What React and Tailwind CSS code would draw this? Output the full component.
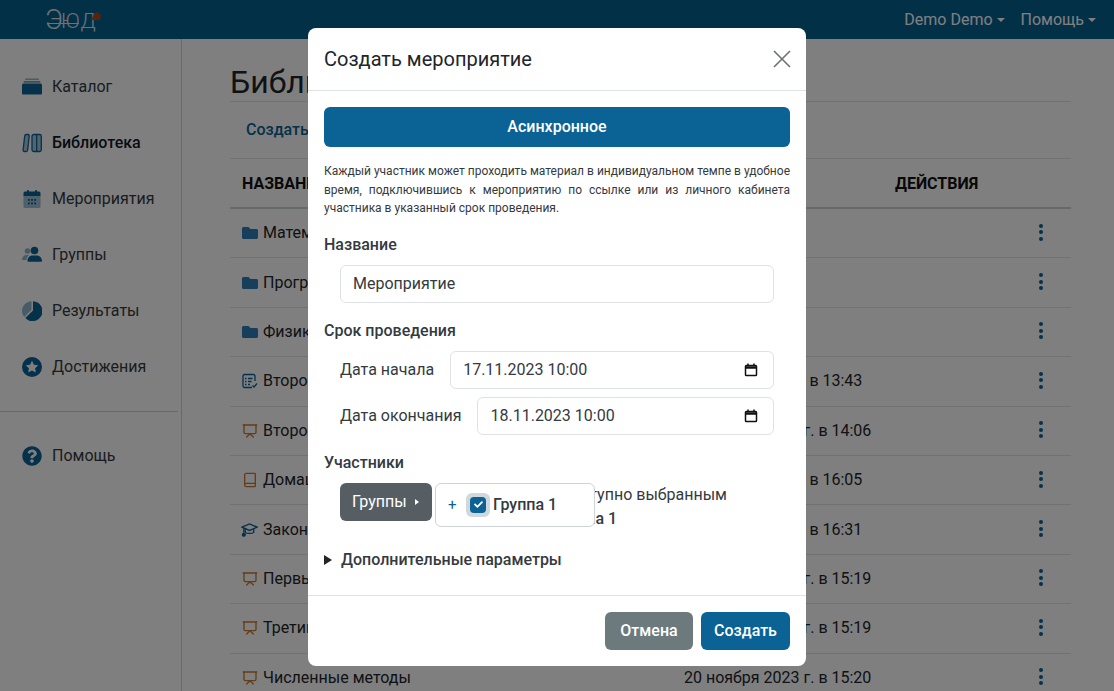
import React from "react";
import { Presentation, Book } from "lucide-react";
import { FaFolder, FaQuestionCircle, FaCheck } from "react-icons/fa";

const rows = [
  { icon: "folder", name: "Математика" },
  { icon: "folder", name: "Программирование" },
  { icon: "folder", name: "Физика" },
  { icon: "test", name: "Второй тест", date: "7 ноября 2023 г. в 13:43" },
  { icon: "slides", name: "Второй урок", date: "20 ноября 2023 г. в 14:06" },
  { icon: "book", name: "Домашнее задание", date: "7 ноября 2023 г. в 16:05" },
  { icon: "course", name: "Законы Ньютона", date: "7 ноября 2023 г. в 16:31" },
  { icon: "slides", name: "Первый урок", date: "20 ноября 2023 г. в 15:19" },
  { icon: "slides", name: "Третий урок", date: "20 ноября 2023 г. в 15:19" },
  { icon: "slides", name: "Численные методы", date: "20 ноября 2023 г. в 15:20" },
];

function RowIcon({ type }) {
  if (type === "folder") return <FaFolder className="w-[16px] h-[16px] text-[#2f7fb8]" />;
  if (type === "slides") return <Presentation className="w-[16px] h-[16px] text-[#c97a30]" strokeWidth={2} />;
  if (type === "book") return <Book className="w-[16px] h-[16px] text-[#c97a30]" strokeWidth={2} />;
  if (type === "course")
    return (
      <svg viewBox="0 0 18 16" className="w-[17px] h-[16px] -ml-[1px] text-[#0a6295]" fill="none" stroke="currentColor" strokeWidth="1.400">
        <path d="M1 5l8-3.500L17 5 9 8.500z" />
        <path d="M4.500 7v3.500c1.500 1.500 7.500 1.500 9 0V7" />
        <path d="M3 6v5" />
        <circle cx="3" cy="13" r="1.500" fill="currentColor" />
      </svg>
    );
  return (
    <svg viewBox="0 0 16 16" className="w-[16px] h-[16px] text-[#0a6295]" fill="none" stroke="currentColor" strokeWidth="1.300">
      <path d="M13 8V3a1.500 1.500 0 0 0-1.500-1.500h-9A1.500 1.500 0 0 0 1 3v10a1.500 1.500 0 0 0 1.500 1.500H10" />
      <path d="M6 5.500h4.500M6 8.500h3.500M6 11.500h2" />
      <path d="M3 5.500h1.500M3 8.500h1.500M3 11.500h1.500" />
      <path d="M10.500 12.500l1.500 1.500 3-3.500" />
    </svg>
  );
}

function NavIcon({ name }) {
  if (name === "catalog")
    return (
      <svg viewBox="0 0 20 20" className="w-5 h-5" fill="#0a6295">
        <rect x="3" y="1.500" width="14" height="1.500" rx="0.700" opacity="0.45" />
        <rect x="1.500" y="4" width="17" height="1.800" rx="0.700" opacity="0.6" />
        <path d="M1.500 6.500h17A1.500 1.500 0 0 1 20 8v8.500a1 1 0 0 1-1 1H1a1 1 0 0 1-1-1V8a1.500 1.500 0 0 1 1.500-1.500z" />
      </svg>
    );
  if (name === "library")
    return (
      <svg viewBox="0 0 20 20" className="w-5 h-5" fill="none" stroke="#0a6295" strokeWidth="1.300">
        <path d="M4.200 1.500h1.800c1 0 1.300.7 1.200 1.500L5.700 17c-.1 1-.8 1.500-1.700 1.500H2.500c-1 0-1.500-.7-1.400-1.500L2.700 3c.1-1 .6-1.500 1.500-1.500z" fill="#0a6295" fillOpacity="0.35" />
        <rect x="10" y="1.500" width="9.300" height="17" rx="1.800" fill="#0a6295" fillOpacity="0.35" />
        <path d="M14.700 1.500v17" />
      </svg>
    );
  if (name === "events")
    return (
      <svg viewBox="0 0 20 20" className="w-5 h-5">
        <rect x="1.500" y="6" width="17" height="13" rx="1.500" fill="#0a6295" opacity="0.4" />
        <path d="M3 2.500h14A1.500 1.500 0 0 1 18.500 4v3h-17V4A1.500 1.500 0 0 1 3 2.500z" fill="#0a6295" />
        <rect x="5" y="1" width="2" height="3" rx="0.800" fill="#0a6295" />
        <rect x="13" y="1" width="2" height="3" rx="0.800" fill="#0a6295" />
        <g fill="#0a6295">
          <rect x="6" y="10" width="1.800" height="1.800" />
          <rect x="9.100" y="10" width="1.800" height="1.800" />
          <rect x="12.200" y="10" width="1.800" height="1.800" />
          <rect x="6" y="13.500" width="1.800" height="1.800" />
          <rect x="9.100" y="13.500" width="1.800" height="1.800" />
          <rect x="12.200" y="13.500" width="1.800" height="1.800" />
        </g>
      </svg>
    );
  if (name === "groups")
    return (
      <svg viewBox="0 0 20 20" className="w-5 h-5" fill="#0a6295">
        <g opacity="0.45">
          <circle cx="5.500" cy="6" r="2.800" />
          <path d="M0 15c0-3 2-5 4.500-5H7c-1.500 1.200-2.500 3-2.500 5H0z" />
        </g>
        <circle cx="12.500" cy="5.500" r="3.800" />
        <path d="M5.500 16c0-3.300 2.300-5.500 5-5.500h4c2.900 0 5.500 2.200 5.500 5.500a.8.800 0 0 1-.8.800H6.300a.8.800 0 0 1-.8-.8z" />
      </svg>
    );
  if (name === "results")
    return (
      <svg viewBox="0 0 20 20" className="w-5 h-5" fill="#0a6295">
        <path d="M9.500 8.800V0.200C4.200 0.500 0 4.700 0 10c0 2.300.9 4.500 2.300 6z" opacity="0.45" />
        <path d="M11 0.200V9.400l-7.700 7.700A10 10 0 1 0 11 0.200z" />
      </svg>
    );
  if (name === "awards")
    return (
      <svg viewBox="0 0 20 20" className="w-5 h-5">
        <circle cx="10" cy="10" r="10" fill="#0a6295" />
        <path d="M10 3.800l1.900 3.900 4.300.6-3.100 3 .7 4.300L10 13.600l-3.800 2 .7-4.300-3.100-3 4.300-.6z" fill="#fff" />
      </svg>
    );
  return <FaQuestionCircle className="w-5 h-5 text-[#0a6295]" />;
}

function NavItem({ icon, label, active }) {
  return (
    <div className="h-[56px] flex items-center pl-[22px] gap-[10px]">
      <NavIcon name={icon} />
      <span className={active ? "font-medium text-[#111827]" : "text-[#343a40]"}>{label}</span>
    </div>
  );
}

function DateRow({ label, value }) {
  return (
    <div className="flex items-center pl-4 pr-4 h-[38px]">
      <span className="mr-4">{label}</span>
      <div className="flex-1 h-[38px] border border-[#dee2e6] rounded-md flex items-center justify-between pl-3 pr-[15px]">
        <span>{value}</span>
        <svg viewBox="0 0 14 14" className="w-[14px] h-[14px]" fill="none" stroke="#111" strokeWidth="1.500">
          <rect x="1.500" y="2.500" width="11" height="10" rx="0.800" />
          <path d="M1.500 4.500h11" strokeWidth="2.500" />
          <path d="M4 0.500v2M10 0.500v2" />
        </svg>
      </div>
    </div>
  );
}

function Caret() {
  return <span className="w-0 h-0 border-x-[4px] border-x-transparent border-t-[4px] border-t-white"></span>;
}

export default function App() {
  return (
    <div className="relative h-[691px] overflow-hidden bg-white font-['Roboto',sans-serif] text-[16px] leading-6">
      <header className="h-[39px] bg-[#05608f] flex items-center justify-between pl-[45px] pr-[18px] text-white">
        <div className="relative flex items-end h-[30px] w-[56px] text-[#dde3e7] font-light">
          <span className="text-[27px] leading-[30px]">Э</span>
          <span className="text-[21px] leading-[28px] tracking-[0.800px] -ml-[2px]">ЮД</span>
          <span className="absolute left-[2px] w-[32px] top-[18px] h-px bg-[#dde3e7]"></span>
          <svg viewBox="0 0 9 9" className="absolute left-[47px] top-[7px] w-[9px] h-[9px]">
            <path d="M0 8C0 4 2 2 5 0l4 3-1 5z" fill="#b4470f" />
          </svg>
        </div>
        <div className="flex items-center gap-[16px]">
          <span className="flex items-center gap-1">
            Demo Demo
            <Caret />
          </span>
          <span className="flex items-center gap-1">
            Помощь
            <Caret />
          </span>
        </div>
      </header>

      <div className="flex h-[652px]">
        <aside className="w-[182px] shrink-0 border-r border-[#ced4da] pt-[20px]">
          <NavItem icon="catalog" label="Каталог" />
          <NavItem icon="library" label="Библиотека" active />
          <NavItem icon="events" label="Мероприятия" />
          <NavItem icon="groups" label="Группы" />
          <NavItem icon="results" label="Результаты" />
          <NavItem icon="awards" label="Достижения" />
          <div className="border-t border-[#ced4da] mt-[16px] mr-[3px] pt-[16px]">
            <NavItem icon="help" label="Помощь" />
          </div>
        </aside>

        <main className="w-[841px] ml-[48px]">
          <h1 className="text-[32px] leading-[38px] pt-[24px] border-b border-[#dee2e6] text-[#212529]">Библиотека</h1>
          <div className="h-[57px] border-b border-[#dee2e6] flex items-center pl-4 font-medium text-[#0a6295]">Создать</div>
          <div className="h-[50px] border-b-2 border-[#ced4da] flex items-center pt-[1px] pl-3 font-bold text-[#111]">
            <span className="w-[653px]">НАЗВАНИЕ</span>
            <span>ДЕЙСТВИЯ</span>
          </div>
          {rows.map((row, i) => (
            <div key={i} className="h-[49.400px] border-b border-[#dee2e6] flex items-center pl-3 text-[#212529]">
              <span className="w-[442px] flex items-center gap-[5px]">
                <RowIcon type={row.icon} />
                {row.name}
              </span>
              <span className="w-[355px]">{row.date}</span>
              <span className="flex flex-col gap-[2.500px] mb-[2px]">
                <span className="w-[4px] h-[4px] rounded-full bg-[#0a6295]"></span>
                <span className="w-[4px] h-[4px] rounded-full bg-[#0a6295]"></span>
                <span className="w-[4px] h-[4px] rounded-full bg-[#0a6295]"></span>
              </span>
            </div>
          ))}
        </main>
      </div>

      {/* backdrop */}
      <div className="absolute inset-0 bg-black/50"></div>

      {/* modal */}
      <div className="absolute left-[308px] top-[28px] w-[498px] h-[638px] bg-white rounded-lg flex flex-col">
        <div className="h-[63px] border-b border-[#dee2e6] flex items-center justify-between pl-4 pr-[15px]">
          <span className="text-[20px] text-[#212529]">Создать мероприятие</span>
          <svg viewBox="0 0 18 18" className="w-[18px] h-[18px]" fill="none" stroke="#6b7075" strokeWidth="1.600">
            <path d="M1 1l16 16M17 1L1 17" />
          </svg>
        </div>

        <div className="flex-1 px-4 pt-4 text-[#343a40]">
          <div className="h-[40px] rounded-md bg-[#0a6295] text-white font-medium flex items-center justify-center">Асинхронное</div>
          <p className="mt-[15px] text-[12px] leading-[18.500px] text-justify">
            Каждый участник может проходить материал в индивидуальном темпе в удобное время, подключившись к мероприятию по ссылке или из личного кабинета участника в указанный срок проведения.
          </p>

          <div className="mt-[15px] font-medium">Название</div>
          <div className="mx-4 mt-2 h-[38px] border border-[#dee2e6] rounded-md flex items-center px-3">Мероприятие</div>

          <div className="mt-[16px] font-medium">Срок проведения</div>
          <div className="mt-2 flex flex-col gap-2">
            <DateRow label="Дата начала" value="17.11.2023 10:00" />
            <DateRow label="Дата окончания" value="18.11.2023 10:00" />
          </div>

          <div className="mt-[16px] font-medium">Участники</div>
          <div className="relative mt-2 h-[44px] pl-4 flex">
            <div className="w-[92px] h-[38px] rounded-md bg-[#565e64] text-white flex items-center pl-3 gap-[8px]">
              Группы
              <span className="w-0 h-0 border-y-[3.500px] border-y-transparent border-l-[4px] border-l-white"></span>
            </div>
            <div className="ml-6 leading-[24px] whitespace-nowrap">
              <div>Мероприятие доступно выбранным</div>
              <div>группам: <span className="font-medium ml-[27px]">Группа 1</span></div>
            </div>
            <div className="absolute left-[111px] top-0 w-[160px] h-[44px] bg-white border border-[#ced4da] rounded-md flex items-center pl-3">
              <span className="text-[#0a6295] text-[15px] w-[18px]">+</span>
              <span className="w-[24px] h-[24px] rounded-[6px] bg-[#cfd8de] flex items-center justify-center mr-[3px]">
                <span className="w-[16px] h-[16px] rounded-[4px] bg-[#0a6295] flex items-center justify-center">
                  <FaCheck className="w-[9px] h-[9px] text-white" />
                </span>
              </span>
              <span className="font-medium">Группа 1</span>
            </div>
          </div>

          <div className="mt-[21px] h-[24px] flex items-center font-medium">
            <span className="w-0 h-0 border-y-[5px] border-y-transparent border-l-[8px] border-l-[#212529] mr-[9px]"></span>
            Дополнительные параметры
          </div>
        </div>

        <div className="h-[71px] border-t border-[#dee2e6] flex items-center justify-end gap-2 pr-4">
          <div className="w-[88px] h-[38px] rounded-md bg-[#6c7a7d] text-white font-medium flex items-center justify-center">Отмена</div>
          <div className="w-[89px] h-[38px] rounded-md bg-[#0a6295] text-white font-medium flex items-center justify-center">Создать</div>
        </div>
      </div>
    </div>
  );
}
